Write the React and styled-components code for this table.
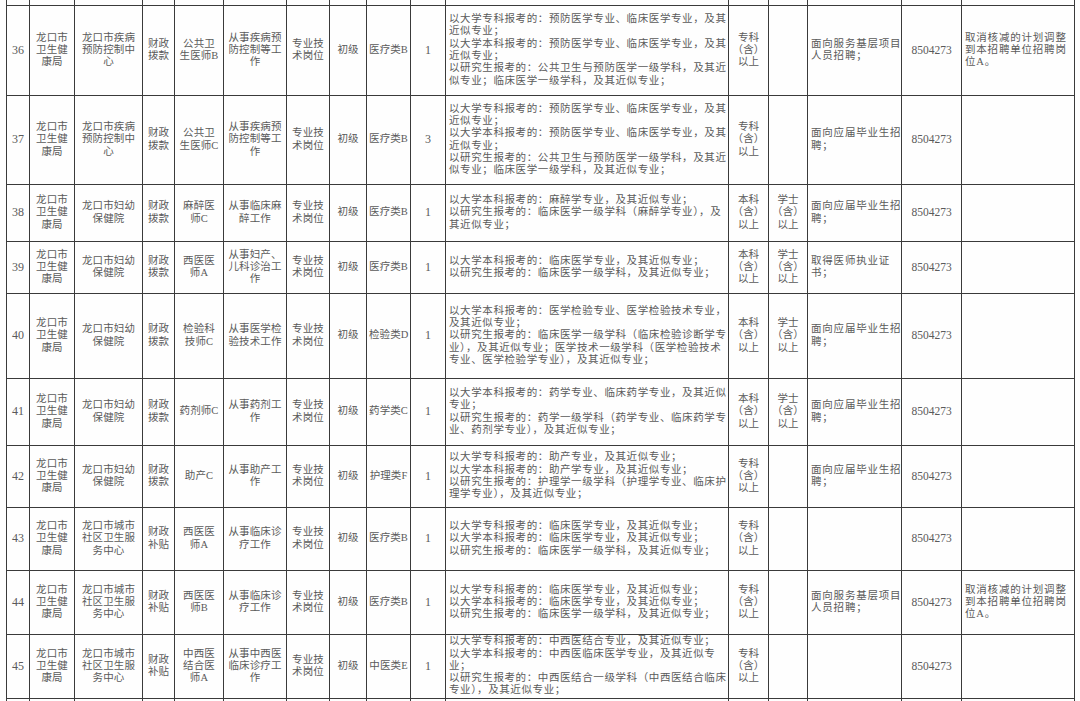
import React from 'react'
import styled, { createGlobalStyle } from 'styled-components'

const GlobalStyle = createGlobalStyle`
  html, body {
    margin: 0;
    padding: 0;
    background: #fff;
  }
  body {
    font-family: "Liberation Serif", "Noto Sans CJK SC", serif;
  }
`

const Page = styled.div`
  width: 1080px;
  height: 701px;
  overflow: hidden;
  background: #fefefe;
  padding-left: 6px;
  box-sizing: border-box;
`

const Sheet = styled.table`
  width: 1068px;
  table-layout: fixed;
  border-collapse: collapse;
  color: #5a5a5a;
  font-size: 10.5px;
  line-height: 12.3px;
`

const Row = styled.tr`
  height: ${p => p.$h}px;
`

const Cell = styled.td`
  border: 1px solid #3a3a3a;
  padding: 0 2px;
  vertical-align: middle;
  text-align: ${p => p.$align || 'center'};
  letter-spacing: 0.1px;
  white-space: nowrap;
  overflow: visible;
  ${p => p.$cut === 'top' && 'border-top: none;'}
  ${p => p.$cut === 'bottom' && 'border-bottom: none;'}
`

const NumCell = styled(Cell)`
  font-size: 12px;
  letter-spacing: 0;
`

const DescCell = styled(Cell)`
  text-align: left;
  padding-left: 3px;
  letter-spacing: 0.6px;
`

const SideCell = styled(Cell)`
  text-align: left;
  padding-left: 3px;
  letter-spacing: 0.8px;
`

const PhoneCell = styled(Cell)`
  font-size: 11.5px;
  letter-spacing: 0;
`

const widths = [23, 45, 68, 32, 49, 63, 43, 37, 44, 35, 283, 40, 39, 94, 60, 113]

const Lines = ({ text }) => {
  if (!text) return null
  const parts = text.split('/')
  return parts.map((t, i) => (
    <React.Fragment key={i}>
      {t}
      {i < parts.length - 1 && <br />}
    </React.Fragment>
  ))
}

const BUREAU = '龙口市/卫生健/康局'
const ZK = '专科/（含）/以上'
const BK = '本科/（含）/以上'
const XS = '学士/（含）/以上'
const YJ = '面向应届毕业生招/聘；'
const FW = '面向服务基层项目/人员招聘；'
const QX = '取消核减的计划调整/到本招聘单位招聘岗/位A。'

const YF = [
  '以大学专科报考的：预防医学专业、临床医学专业，及其',
  '近似专业；',
  '以大学本科报考的：预防医学专业、临床医学专业，及其',
  '近似专业；',
  '以研究生报考的：公共卫生与预防医学一级学科，及其近',
  '似专业；临床医学一级学科，及其近似专业；',
]

const LC = [
  '以大学专科报考的：临床医学专业，及其近似专业；',
  '以大学本科报考的：临床医学专业，及其近似专业；',
  '以研究生报考的：临床医学一级学科，及其近似专业；',
]

const rows = [
  { h: 90, no: 36, unit: '龙口市疾病/预防控制中/心', fund: '财政/拨款', post: '公共卫/生医师B', duty: '从事疾病预/防控制等工/作', kind: '医疗类B', n: 1, desc: YF, edu: ZK, deg: '', other: FW, note: QX },
  { h: 89, no: 37, unit: '龙口市疾病/预防控制中/心', fund: '财政/拨款', post: '公共卫/生医师C', duty: '从事疾病预/防控制等工/作', kind: '医疗类B', n: 3, desc: YF, edu: ZK, deg: '', other: YJ, note: '' },
  {
    h: 57, no: 38, unit: '龙口市妇幼/保健院', fund: '财政/拨款', post: '麻醉医/师C', duty: '从事临床麻/醉工作', kind: '医疗类B', n: 1,
    desc: ['以大学本科报考的：麻醉学专业，及其近似专业；', '以研究生报考的：临床医学一级学科（麻醉学专业），及', '其近似专业；'],
    edu: BK, deg: XS, other: YJ, note: '',
  },
  {
    h: 52, no: 39, unit: '龙口市妇幼/保健院', fund: '财政/拨款', post: '西医医/师A', duty: '从事妇产、/儿科诊治工/作', kind: '医疗类B', n: 1,
    desc: ['以大学本科报考的：临床医学专业，及其近似专业；', '以研究生报考的：临床医学一级学科，及其近似专业；'],
    edu: BK, deg: XS, other: '取得医师执业证/书；', note: '',
  },
  {
    h: 85, no: 40, unit: '龙口市妇幼/保健院', fund: '财政/拨款', post: '检验科/技师C', duty: '从事医学检/验技术工作', kind: '检验类D', n: 1,
    desc: [
      '以大学本科报考的：医学检验专业、医学检验技术专业，',
      '及其近似专业；',
      '以研究生报考的：临床医学一级学科（临床检验诊断学专',
      '业），及其近似专业；医学技术一级学科（医学检验技术',
      '专业、医学检验学专业），及其近似专业；',
    ],
    edu: BK, deg: XS, other: YJ, note: '',
  },
  {
    h: 67, no: 41, unit: '龙口市妇幼/保健院', fund: '财政/拨款', post: '药剂师C', duty: '从事药剂工/作', kind: '药学类C', n: 1,
    desc: [
      '以大学本科报考的：药学专业、临床药学专业，及其近似',
      '专业；',
      '以研究生报考的：药学一级学科（药学专业、临床药学专',
      '业、药剂学专业），及其近似专业；',
    ],
    edu: BK, deg: XS, other: YJ, note: '',
  },
  {
    h: 62, no: 42, unit: '龙口市妇幼/保健院', fund: '财政/拨款', post: '助产C', duty: '从事助产工/作', kind: '护理类F', n: 1,
    desc: [
      '以大学专科报考的：助产专业，及其近似专业；',
      '以大学本科报考的：助产学专业，及其近似专业；',
      '以研究生报考的：护理学一级学科（护理学专业、临床护',
      '理学专业），及其近似专业；',
    ],
    edu: ZK, deg: '', other: YJ, note: '',
  },
  { h: 63, no: 43, unit: '龙口市城市/社区卫生服/务中心', fund: '财政/补贴', post: '西医医/师A', duty: '从事临床诊/疗工作', kind: '医疗类B', n: 1, desc: LC, edu: ZK, deg: '', other: '', note: '' },
  { h: 64, no: 44, unit: '龙口市城市/社区卫生服/务中心', fund: '财政/补贴', post: '西医医/师B', duty: '从事临床诊/疗工作', kind: '医疗类B', n: 1, desc: LC, edu: ZK, deg: '', other: FW, note: QX },
  {
    h: 64, no: 45, unit: '龙口市城市/社区卫生服/务中心', fund: '财政/补贴', post: '中西医/结合医/师A', duty: '从事中西医/临床诊疗工/作', kind: '中医类E', n: 1,
    desc: [
      '以大学专科报考的：中西医结合专业，及其近似专业；',
      '以大学本科报考的：中西医临床医学专业，及其近似专',
      '业；',
      '以研究生报考的：中西医结合一级学科（中西医结合临床',
      '专业），及其近似专业；',
    ],
    edu: ZK, deg: '', other: '', note: '',
  },
]

const EdgeRow = ({ h, cut }) => (
  <Row $h={h}>
    {widths.map((_, i) => <Cell key={i} $cut={cut} />)}
  </Row>
)

export default function App() {
  return (
    <Page>
      <GlobalStyle />
      <Sheet>
        <colgroup>
          {widths.map((w, i) => <col key={i} style={{ width: w }} />)}
        </colgroup>
        <tbody>
          <EdgeRow h={5} cut="top" />
          {rows.map(r => (
            <Row key={r.no} $h={r.h}>
              <NumCell>{r.no}</NumCell>
              <Cell><Lines text={BUREAU} /></Cell>
              <Cell><Lines text={r.unit} /></Cell>
              <Cell><Lines text={r.fund} /></Cell>
              <Cell><Lines text={r.post} /></Cell>
              <Cell><Lines text={r.duty} /></Cell>
              <Cell><Lines text="专业技/术岗位" /></Cell>
              <Cell>初级</Cell>
              <Cell>{r.kind}</Cell>
              <NumCell>{r.n}</NumCell>
              <DescCell><Lines text={r.desc.join('/')} /></DescCell>
              <Cell><Lines text={r.edu} /></Cell>
              <Cell><Lines text={r.deg} /></Cell>
              <SideCell><Lines text={r.other} /></SideCell>
              <PhoneCell>8504273</PhoneCell>
              <SideCell><Lines text={r.note} /></SideCell>
            </Row>
          ))}
          <EdgeRow h={10} cut="bottom" />
        </tbody>
      </Sheet>
    </Page>
  )
}
